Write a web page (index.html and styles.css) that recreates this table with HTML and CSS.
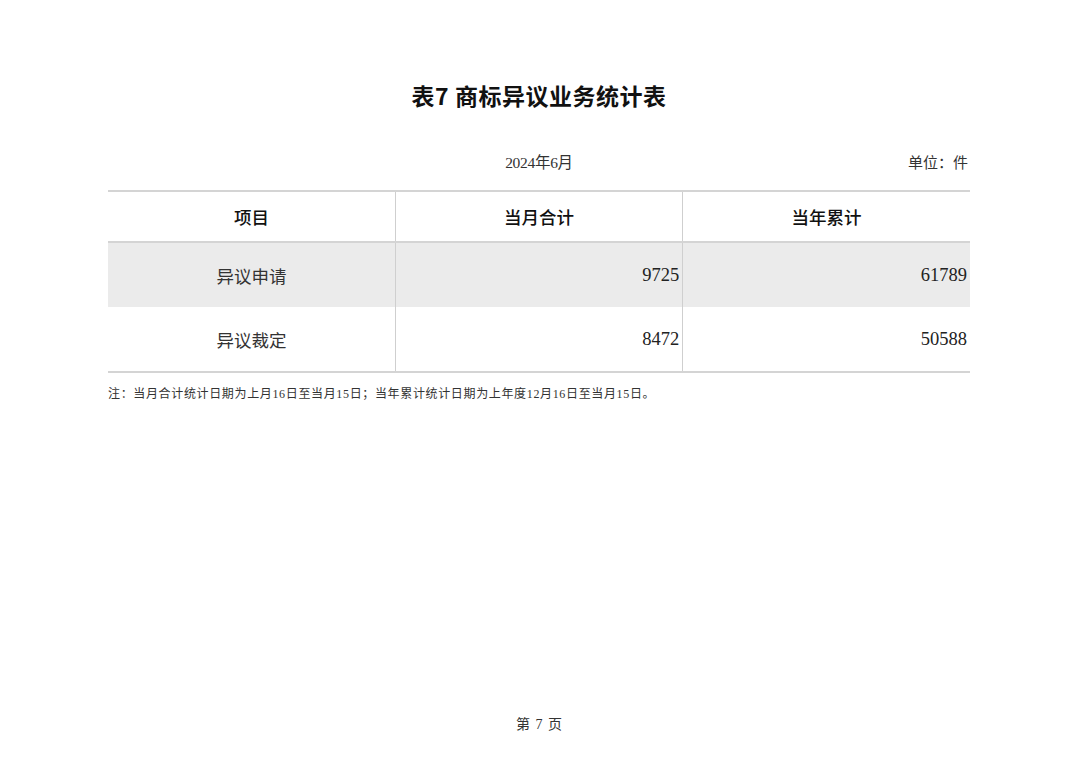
FILE: index.html
```html
<!DOCTYPE html>
<html lang="zh">
<head>
<meta charset="utf-8">
<link rel="stylesheet" href="styles.css">
</head>
<body>
<div class="page">
  <h1 class="title">表7 商标异议业务统计表</h1>
  <div class="meta">
    <span class="meta-spacer"></span>
    <span class="meta-date">2024年6月</span>
    <span class="meta-unit">单位：件</span>
  </div>
  <table class="stats">
    <thead>
      <tr><th>项目</th><th>当月合计</th><th>当年累计</th></tr>
    </thead>
    <tbody>
      <tr class="shaded"><td class="name">异议申请</td><td class="num">9725</td><td class="num">61789</td></tr>
      <tr><td class="name">异议裁定</td><td class="num">8472</td><td class="num">50588</td></tr>
    </tbody>
  </table>
  <p class="note">注：当月合计统计日期为上月16日至当月15日；当年累计统计日期为上年度12月16日至当月15日。</p>
  <div class="grow"></div>
  <div class="footer">第 7 页</div>
</div>
</body>
</html>
```
FILE: styles.css
```css
html, body {
  margin: 0;
  padding: 0;
  background: #ffffff;
}
body {
  font-family: "Liberation Serif", "Noto Sans CJK SC", serif;
  color: #1a1a1a;
}
.page {
  width: 862px;
  height: 763px;
  margin: 0 auto 0 108px;
  display: flex;
  flex-direction: column;
  box-sizing: border-box;
  padding-top: 80px;
}
.title {
  margin: 0;
  font-family: "Noto Sans CJK SC", sans-serif;
  font-weight: 700;
  font-size: 23px;
  line-height: 30px;
  text-align: center;
  color: #111;
  letter-spacing: 0.5px;
}
.meta {
  margin-top: 43px;
  display: grid;
  grid-template-columns: 1fr auto 1fr;
  font-size: 15.5px;
  line-height: 20px;
  font-family: "Liberation Serif", "Noto Sans CJK SC", serif;
  color: #333;
}
.meta-date {
  text-align: center;
  letter-spacing: -0.3px;
}
.meta-unit {
  text-align: right;
  padding-right: 2px;
  font-size: 15px;
}
.stats {
  margin-top: 17px;
  width: 862px;
  border-collapse: collapse;
  table-layout: fixed;
}
.stats th, .stats td {
  border-left: 1px solid #cfcfcf;
  border-right: 1px solid #cfcfcf;
  padding: 0;
}
.stats th:first-child, .stats td:first-child { border-left: none; }
.stats th:last-child, .stats td:last-child { border-right: none; }
.stats thead th {
  border-top: 2px solid #d4d4d4;
  border-bottom: 2px solid #d4d4d4;
  height: 49px;
  font-family: "Noto Sans CJK SC", sans-serif;
  font-weight: 500;
  font-size: 17.5px;
  color: #111;
}
.stats tbody td {
  height: 64px;
  font-size: 18.5px;
  color: #222;
}
.stats tbody tr:last-child td {
  border-bottom: 2px solid #d4d4d4;
}
.stats tr.shaded td {
  background: #ebebeb;
}
.stats td.name {
  text-align: center;
  font-family: "Noto Sans CJK SC", sans-serif;
  font-size: 17.5px;
  font-weight: 400;
  color: #333;
}
.stats td.num {
  text-align: right;
  padding-right: 3px;
  font-family: "Liberation Serif", serif;
}
.note {
  margin: 13px 0 0 0;
  font-size: 12px;
  line-height: 16px;
  color: #333;
  font-family: "Liberation Serif", "Noto Sans CJK SC", serif;
  letter-spacing: 0.65px;
}
.grow { flex: 1; }
.footer {
  text-align: center;
  font-size: 14px;
  line-height: 20px;
  margin-bottom: 28px;
  color: #333;
  word-spacing: 2px;
}
```
